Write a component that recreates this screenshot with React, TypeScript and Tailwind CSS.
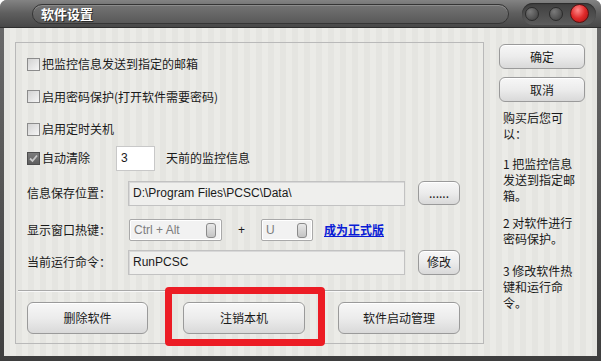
import clsx from 'clsx'

const cjk = "font-['Microsoft_YaHei','Noto_Sans_CJK_SC',sans-serif]"
const latin = "font-['Liberation_Sans','Noto_Sans_CJK_SC',sans-serif]"

function Check({ checked }: { checked?: boolean }) {
  return (
    <span
      className={clsx(
        'flex h-[13px] w-[13px] shrink-0 items-center justify-center border',
        checked
          ? 'border-[#4e4e4e] bg-linear-to-b from-[#7c7c7c] to-[#5e5e5e]'
          : 'border-[#8c8c8c] bg-linear-to-br from-[#d2d2d2] to-[#f6f6f6]'
      )}
    >
      {checked && (
        <svg width="9" height="9" viewBox="0 0 9 9">
          <path d="M1 4.5 L3.5 7 L8 1.5" stroke="#c8c8c8" strokeWidth="1.8" fill="none" />
        </svg>
      )}
    </span>
  )
}

function Btn({ label, className }: { label: string; className?: string }) {
  return (
    <button
      className={clsx(
        'flex items-center justify-center rounded-[6px] border border-[#9a9a9a] bg-linear-to-b from-[#f7f7f7] via-[#ececec] to-[#d9d9d9] text-[12px] text-[#1a1a1a] shadow-[inset_0_1px_0_#ffffff]',
        className
      )}
    >
      {label}
    </button>
  )
}

function Combo({ value, className }: { value: string; className?: string }) {
  return (
    <div
      className={clsx(
        'flex items-center justify-between rounded-[2px] border border-[#a9a9a9] bg-[#f2f2f2] pl-[4px] pr-[5px] shadow-[inset_0_0_0_1px_#ffffff]',
        className
      )}
    >
      <span className={clsx(latin, 'text-[12px] text-[#7d7d7d]')}>{value}</span>
      <span className="h-[15px] w-[10px] rounded-[3px] border border-[#8a8a8a] bg-linear-to-b from-[#e8e8e8] to-[#c4c4c4]" />
    </div>
  )
}

function Field({ value, className }: { value: string; className?: string }) {
  return (
    <div
      className={clsx(
        'flex items-center border border-[#c2c2c2] bg-[#efefed] pl-[4px] shadow-[inset_1px_1px_0_#d8d8d8]',
        latin,
        'text-[12px] text-[#1a1a1a]',
        className
      )}
    >
      {value}
    </div>
  )
}

export default function App() {
  return (
    <div className={clsx('relative flex h-[361px] w-[601px] flex-col overflow-hidden rounded-t-[7px] bg-linear-to-b from-[#6c6c6c] to-[#3e3e3e]', cjk)}>
      {/* title bar */}
      <div className="flex h-[28px] shrink-0 items-center border-b border-[#2e2e2e] bg-linear-to-b from-[#838383] via-[#5e5e5e] to-[#484848] pr-[5px]">
        <div className="ml-[32px] flex h-[20px] flex-1 items-center rounded-full border border-[#353535] bg-linear-to-b from-[#747474] to-[#595959] pl-[8px] shadow-[inset_0_1px_0_#8c8c8c]">
          <span className="text-[13px] font-bold leading-none text-white [text-shadow:1px_1px_0_#2a2a2a]">软件设置</span>
        </div>
        <div className="ml-[13px] flex h-[22px] w-[74px] items-center rounded-full bg-linear-to-b from-[#3f3f3f] to-[#5c5c5c] pl-[3px] shadow-[inset_0_1px_1px_#2c2c2c]">
          <span className="h-[14px] w-[14px] rounded-full border border-[#2c2c2c] bg-radial-[at_35%_30%] from-[#7a7a7a] to-[#3a3a3a]" />
          <span className="ml-[10px] h-[14px] w-[14px] rounded-full border border-[#2c2c2c] bg-radial-[at_35%_30%] from-[#7a7a7a] to-[#3a3a3a]" />
          <span className="ml-[7px] h-[19px] w-[19px] rounded-full border border-[#5a1010] bg-radial-[at_40%_30%] from-[#ff8a8a] via-[#e02a2a] to-[#9c0f0f]" />
        </div>
      </div>

      {/* body */}
      <div className="mx-[4px] mb-[5px] flex flex-1 bg-[repeating-linear-gradient(90deg,#e5e5e1_0px,#e5e5e1_6px,#ebebe7_6px,#ebebe7_12px)] pl-[11px] pt-[14px]">
        <div className="flex h-[302px] w-[469px] flex-col border border-[#b9b9b9] pl-[11px] pt-[5px] text-[12px] text-[#1a1a1a]">
          <div className="flex h-[32px] items-center gap-[2px]">
            <Check />
            <span>把监控信息发送到指定的邮箱</span>
          </div>
          <div className="flex h-[33px] items-center gap-[2px]">
            <Check />
            <span>启用密码保护(打开软件需要密码)</span>
          </div>
          <div className="flex h-[32px] items-center gap-[2px]">
            <Check />
            <span>启用定时关机</span>
          </div>
          <div className="flex h-[26px] items-center">
            <Check checked />
            <span className="ml-[2px] w-[74px]">自动清除</span>
            <div className={clsx('flex h-[25px] w-[39px] items-center border border-[#c8c8c8] bg-white pl-[4px]', latin)}>3</div>
            <span className="ml-[11px]">天前的监控信息</span>
          </div>
          <div className="flex h-[44px] items-center">
            <span className="w-[101px]">信息保存位置：</span>
            <Field value="D:\Program Files\PCSC\Data\" className="h-[25px] w-[277px]" />
            <Btn label="......" className="ml-[13px] h-[24px] w-[42px]" />
          </div>
          <div className="flex h-[30px] items-center">
            <span className="w-[102px]">显示窗口热键：</span>
            <Combo value="Ctrl + Alt" className="h-[22px] w-[93px]" />
            <span className={clsx('w-[39px] text-center', latin)}>+</span>
            <Combo value="U" className="h-[22px] w-[52px]" />
            <a className="ml-[11px] font-bold text-[#0a1cd6] underline">成为正式版</a>
          </div>
          <div className="flex h-[34px] items-center">
            <span className="w-[101px]">当前运行命令：</span>
            <Field value="RunPCSC" className="h-[25px] w-[277px]" />
            <Btn label="修改" className="ml-[13px] h-[25px] w-[42px]" />
          </div>
          <div className="ml-[-9px] mr-[1px] mt-[11px] h-px bg-[#a9a9a9] shadow-[0_1px_0_#f8f8f8]" />
          <div className="mt-[11px] flex">
            <Btn label="删除软件" className="h-[32px] w-[121px]" />
            <Btn label="注销本机" className="ml-[35px] h-[32px] w-[122px]" />
            <Btn label="软件启动管理" className="ml-[33px] h-[32px] w-[122px]" />
          </div>
        </div>

        <div className="ml-[15px] flex w-[86px] flex-col pt-[2px] text-[12px] leading-[16px] text-[#1a1a1a]">
          <Btn label="确定" className="h-[25px] w-[86px]" />
          <Btn label="取消" className="mt-[8px] h-[25px] w-[86px]" />
          <p className="mt-[8px] pl-[4px]">购买后您可<br />以：</p>
          <p className="mt-[14px] pl-[4px]">1 把监控信息<br />发送到指定邮<br />箱。</p>
          <p className="mt-[11px] pl-[4px]">2 对软件进行<br />密码保护。</p>
          <p className="mt-[16px] pl-[4px]">3 修改软件热<br />键和运行命<br />令。</p>
        </div>
      </div>

      {/* highlight annotation */}
      <div className="absolute left-[165px] top-[287px] h-[59px] w-[160px] rounded-[4px] border-[7px] border-[#ec1c24]" />
    </div>
  )
}
